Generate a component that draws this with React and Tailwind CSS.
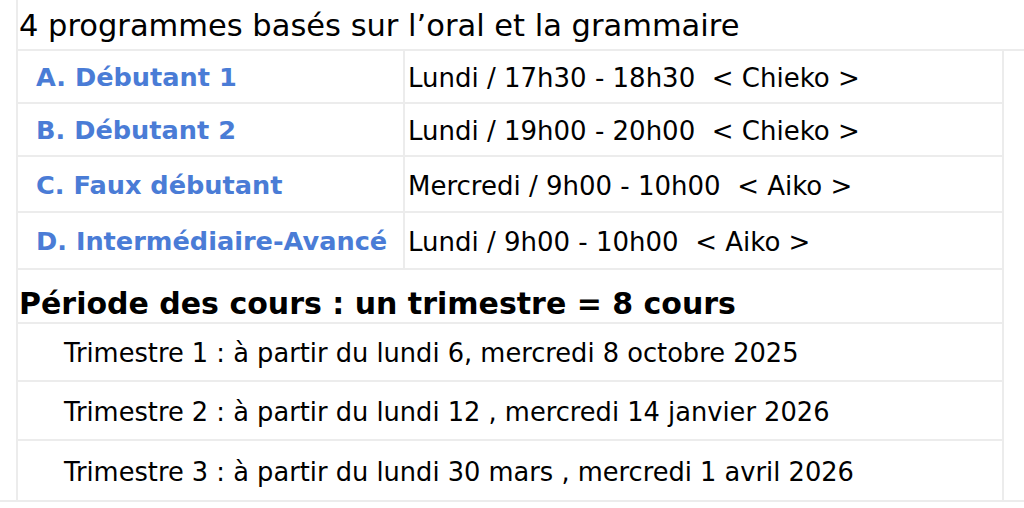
import React from 'react';

const courses = [
  { label: 'A. Débutant 1', slot: 'Lundi / 17h30 - 18h30  < Chieko >', h: 'h-[53px]' },
  { label: 'B. Débutant 2', slot: 'Lundi / 19h00 - 20h00  < Chieko >', h: 'h-[53px]' },
  { label: 'C. Faux débutant', slot: 'Mercredi / 9h00 - 10h00  < Aiko >', h: 'h-[56px]' },
  { label: 'D. Intermédiaire-Avancé', slot: 'Lundi / 9h00 - 10h00  < Aiko >', h: 'h-[57px]' },
];

const terms = [
  { text: 'Trimestre 1 : à partir du lundi 6, mercredi 8 octobre 2025', h: 'h-[58px]' },
  { text: 'Trimestre 2 : à partir du lundi 12 , mercredi 14 janvier 2026', h: 'h-[59px]' },
  { text: 'Trimestre 3 : à partir du lundi 30 mars , mercredi 1 avril 2026', h: 'h-[59px]' },
];

const App = () => {
  return (
    <div className="w-[1024px] h-[508px] bg-white text-black font-['DejaVu_Sans',Verdana,sans-serif]">
      <div className="ml-4 border-l-2 border-[#ececec]">
        {/* Title */}
        <div className="h-[51px] pt-[4px] border-b-2 border-[#ececec] flex items-center">
          <h1 className="pl-[1px] text-[30.5px] leading-none">4 programmes basés sur l’oral et la grammaire</h1>
        </div>

        {/* Table */}
        <div className="w-[986px] border-r-2 border-[#ececec]">
          {courses.map((c) => (
            <div key={c.label} className={`${c.h} pt-[3px] flex border-b-2 border-[#ececec]`}>
              <div className="w-[385px] flex items-center pl-[18px] text-[25.6px] leading-none font-bold text-[#4a7cd6]">
                {c.label}
              </div>
              <div className="flex-1 flex items-center pl-[3px] -mt-[3px] pt-[3px] border-l-2 border-[#ececec] text-[26px] leading-none whitespace-pre">
                {c.slot}
              </div>
            </div>
          ))}

          <div className="h-[54px] pt-[16px] flex items-center border-b-2 border-[#ececec] pl-[1px] text-[30px] leading-none font-bold">
            Période des cours : un trimestre = 8 cours
          </div>

          {terms.map((t, i) => (
            <div
              key={t.text}
              className={`${t.h} pt-[4px] flex items-center pl-[46px] text-[25.7px] leading-none ${i < terms.length - 1 ? 'border-b-2 border-[#ececec]' : ''}`}
            >
              {t.text}
            </div>
          ))}
        </div>
      </div>
      <div className="h-[2px] bg-[#ececec]" />
    </div>
  );
};

export default App;
